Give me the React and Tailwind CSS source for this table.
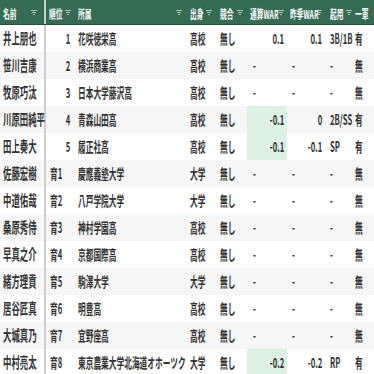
const rows = [
  ["井上朋也", 1, "花咲徳栄高", "高校", "無し", 0.1, 0.1, "3B/1B", "有"],
  ["笹川吉康", 2, "横浜商業高", "高校", "無し", "-", "-", "-", "無"],
  ["牧原巧汰", 3, "日本大学藤沢高", "高校", "無し", "-", "-", "-", "無"],
  ["川原田純平", 4, "青森山田高", "高校", "無し", -0.1, 0, "2B/SS", "有"],
  ["田上奏大", 5, "履正社高", "高校", "無し", -0.1, -0.1, "SP", "有"],
  ["佐藤宏樹", "育1", "慶應義塾大学", "大学", "無し", "-", "-", "-", "無"],
  ["中道佑哉", "育2", "八戸学院大学", "大学", "無し", "-", "-", "-", "無"],
  ["桑原秀侍", "育3", "神村学園高", "高校", "無し", "-", "-", "-", "無"],
  ["早真之介", "育4", "京都国際高", "高校", "無し", "-", "-", "-", "無"],
  ["緒方理貢", "育5", "駒澤大学", "大学", "無し", "-", "-", "-", "無"],
  ["居谷匠真", "育6", "明豊高", "高校", "無し", "-", "-", "-", "無"],
  ["大城真乃", "育7", "宜野座高", "高校", "無し", "-", "-", "-", "無"],
  ["中村亮太", "育8", "東京農業大学北海道オホーツク", "大学", "無し", -0.2, -0.2, "RP", "有"],
];

// per column: header label, header padding, body left pad, body right pad
const cols = [
  { label: "名前", hp: "pl-[3px] pr-[7px]", pl: "pl-[3px]", pr: "pr-[3px]" },
  { label: "順位", hp: "pl-[3px] pr-[5px]", pl: "pl-[4px]", pr: "pr-[6px]" },
  { label: "所属", hp: "pl-[2px] pr-[5px]", pl: "pl-[2px]", pr: "pr-[4px]" },
  { label: "出身", hp: "pl-[3px] pr-[6px]", pl: "pl-[3px]", pr: "pr-[4px]" },
  { label: "競合", hp: "pl-[2px] pr-[4px]", pl: "pl-[2px]", pr: "pr-[4px]" },
  { label: "通算WAR", hp: "pl-[3px] pr-[3px]", pl: "pl-[6px]", pr: "pr-[3px]" },
  { label: "昨季WAR", hp: "pl-[3px] pr-[5px]", pl: "pl-[5px]", pr: "pr-[5px]" },
  { label: "起用", hp: "pl-[3px] pr-[2px]", pl: "pl-[3px]", pr: "pr-[2px]" },
  { label: "一軍", hp: "pl-[1px] pr-0", pl: "pl-[1px]", pr: "pr-0" },
];

const grid = "grid grid-cols-[46px_30px_111px_31px_29px_40px_40px_27px_20px]";

function FilterIcon() {
  return (
    <svg width="6" height="5" viewBox="0 0 6 5" className="shrink-0 opacity-60">
      <path d="M0 0.5h6M1 2.5h4M2 4.5h2" stroke="#fff" strokeWidth="1" />
    </svg>
  );
}

function Cell({ value, i, highlight, first }) {
  const c = cols[i];
  const right = typeof value === "number";
  const text = right ? String(value) : value;
  return (
    <div
      className={`flex items-center h-full min-w-0 ${right ? `justify-end ${c.pr}` : c.pl} ${
        first ? "border-r-2 border-[#cdcdcd]" : ""
      } ${highlight ? "bg-[#dcf0e4]" : ""}`}
    >
      <span
        className={`inline-block whitespace-nowrap ${
          first ? "text-[15px] scale-x-[0.56]" : "text-[14px] scale-x-[0.55]"
        } ${right ? "origin-right" : "origin-left"}`}
      >
        {text}
      </span>
    </div>
  );
}

export default function App() {
  return (
    <div className="w-[374px] h-[374px] overflow-hidden bg-white text-[#333] font-bold [font-family:'Noto_Sans_CJK_JP',sans-serif]">
      <div className={`${grid} h-[25px] bg-[#356b51] border-b border-[#27503c] text-white`}>
        {cols.map((c, i) => (
          <div
            key={c.label}
            className={`flex items-center min-w-0 ${c.hp} ${i === 0 ? "border-r-2 border-[#c9c9c9]" : ""}`}
          >
            <div className="flex-1 min-w-0">
              <span className="inline-block whitespace-nowrap text-[12px] scale-x-[0.56] origin-left">
                {c.label}
              </span>
            </div>
            {i < 8 && <FilterIcon />}
          </div>
        ))}
      </div>
      {rows.map((r, ri) => (
        <div key={r[0]} className={`${grid} h-[27px] ${ri % 2 ? "bg-[#f6f6f6]" : "bg-white"}`}>
          {r.map((v, i) => (
            <Cell
              key={i}
              value={v}
              i={i}
              first={i === 0}
              highlight={i === 5 && typeof v === "number" && v < 0}
            />
          ))}
        </div>
      ))}
    </div>
  );
}
